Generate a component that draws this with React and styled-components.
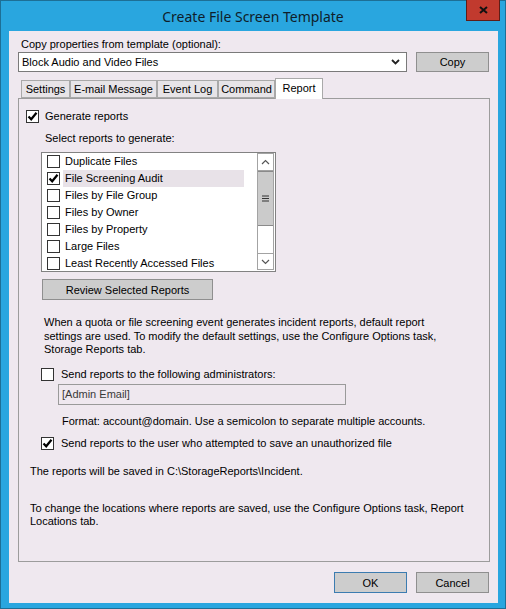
import React from 'react';
import styled, { createGlobalStyle } from 'styled-components';

const GlobalStyle = createGlobalStyle`
  html, body { margin: 0; padding: 0; background: #29a6df; }
  body { font-family: "Liberation Sans", Arial, sans-serif; font-size: 11px; color: #000; }
  * { box-sizing: border-box; }
`;

const Window = styled.div`
  width: 506px;
  height: 609px;
  display: flex;
  flex-direction: column;
  background: #29a6df;
  border: 1px solid #1d6f96;
`;

const TitleBar = styled.div`
  height: 30px;
  flex: none;
  display: grid;
  grid-template-columns: 1fr auto 1fr;
  align-items: start;
`;

const Title = styled.div`
  grid-column: 2;
  font-family: "Noto Sans", "Open Sans", sans-serif;
  font-size: 14px;
  line-height: 31px;
  color: #0f1d2a;
  white-space: nowrap;
`;

const CloseButton = styled.div`
  grid-column: 3;
  justify-self: end;
  margin: -1px 5px 0 0;
  width: 34px;
  height: 21px;
  background: #c13a2e;
  border: 1px solid #5e1d17;
  border-top: none;
  display: flex;
  align-items: center;
  justify-content: center;
`;

const Client = styled.div`
  flex: 1;
  margin: 0 7px 5px 8px;
  background: #efe8ef;
  padding: 7px 9px 10px;
  display: flex;
  flex-direction: column;
`;

const FieldLabel = styled.div`
  line-height: 13px;
  height: 13px;
  padding-left: 3px;
`;

const TemplateRow = styled.div`
  margin-top: 1px;
  display: flex;
  gap: 9px;
  height: 20px;
`;

const Combo = styled.div`
  flex: 1;
  background: #fff;
  border: 1px solid #7a7a7a;
  display: flex;
  align-items: center;
  justify-content: space-between;
  padding: 0 6px 0 3px;
`;

const Button = styled.div`
  width: ${p => p.$w}px;
  height: ${p => p.$h || 21}px;
  flex: none;
  background: #cdcdcd;
  border: 1px solid ${p => (p.$default ? '#3c7cb0' : '#8f8f8f')};
  display: flex;
  align-items: center;
  justify-content: center;
  color: #000;
  margin: ${p => p.$m || '0'};
`;

const TabStrip = styled.div`
  margin-top: 6px;
  height: 20px;
  display: flex;
  align-items: flex-end;
  padding-left: 3px;
  position: relative;
  z-index: 1;
`;

const Tab = styled.div`
  width: ${p => p.$w}px;
  height: ${p => (p.$active ? 21 : 18)}px;
  margin-bottom: ${p => (p.$active ? -1 : 0)}px;
  background: ${p => (p.$active ? '#fff' : '#e7e4e7')};
  border: 1px solid #a9a9a9;
  border-bottom: ${p => (p.$active ? 'none' : '1px solid #a9a9a9')};
  display: flex;
  align-items: center;
  justify-content: center;
  padding-bottom: ${p => (p.$active ? 3 : 0)}px;
  white-space: nowrap;
`;

const TabPanel = styled.div`
  height: 464px;
  margin-right: -1px;
  border: 1px solid #9c9c9c;
  background: #efe8ef;
  padding: 11px 7px 0;
  display: flex;
  flex-direction: column;
  align-items: flex-start;
`;

const Footer = styled.div`
  margin-top: 10px;
  display: flex;
  justify-content: flex-end;
  gap: 9px;
`;

const CheckRow = styled.div`
  display: flex;
  align-items: center;
  gap: ${p => p.$gap || 6}px;
  height: 13px;
  margin: ${p => p.$m || '0'};
`;

const Box = styled.span`
  width: 13px;
  height: 13px;
  flex: none;
  background: #fff;
  border: 1px solid #333;
  display: flex;
  align-items: center;
  justify-content: center;
`;

const Text = styled.div`
  line-height: ${p => p.$lh || 13}px;
  margin: ${p => p.$m || '0'};
  white-space: nowrap;
  color: ${p => p.$c || '#000'};
`;

const ListBox = styled.div`
  margin: 7px 0 0 15px;
  width: 235px;
  height: 120px;
  border: 1px solid #828282;
  background: #fff;
  display: flex;
  overflow: hidden;
`;

const ListItems = styled.div`
  flex: 1;
  padding-left: 5px;
`;

const ListRow = styled.div`
  height: 17px;
  display: flex;
  align-items: center;
  gap: 3px;
`;

const ItemLabel = styled.span`
  width: 181px;
  height: 17px;
  line-height: 17px;
  padding-left: 2px;
  background: ${p => (p.$selected ? '#e8e2e8' : 'transparent')};
  white-space: nowrap;
`;

const ScrollBar = styled.div`
  width: 17px;
  height: 117px;
  margin-right: 1px;
  flex: none;
  border: 1px solid #a3a3a3;
  display: flex;
  flex-direction: column;
  background: #fff;
`;

const ScrollArrow = styled.div`
  height: ${p => p.$h}px;
  flex: none;
  display: flex;
  align-items: center;
  justify-content: center;
  border-${p => p.$side}: 1px solid #a3a3a3;
`;

const Thumb = styled.div`
  height: 55px;
  flex: none;
  background: #cbcbcb;
  border-top: 1px solid #8a8a8a;
  border-bottom: 1px solid #8a8a8a;
  display: flex;
  align-items: center;
  justify-content: center;
`;

const Track = styled.div`
  flex: 1;
`;

const EmailField = styled.div`
  margin: 3px 0 0 32px;
  width: 288px;
  height: 21px;
  border: 1px solid #9a9a9a;
  padding-left: 3px;
  display: flex;
  align-items: center;
  color: #3a3a3a;
`;

const Check = ({ on }) => (
  <Box>
    {on && (
      <svg width="11" height="11" viewBox="0 0 11 11">
        <path d="M1.5 5.5 L4.2 8.3 L9.5 1.8" fill="none" stroke="#000" strokeWidth="2.2" />
      </svg>
    )}
  </Box>
);

const Chevron = ({ up, color = '#555', w = 1.2 }) => (
  <svg width="9" height="6" viewBox="0 0 9 6">
    <path d={up ? 'M1 5 L4.5 1.5 L8 5' : 'M1 1 L4.5 4.5 L8 1'} fill="none" stroke={color} strokeWidth={w} />
  </svg>
);

const reports = [
  'Duplicate Files',
  'File Screening Audit',
  'Files by File Group',
  'Files by Owner',
  'Files by Property',
  'Large Files',
  'Least Recently Accessed Files',
];

const tabs = [
  ['Settings', 49],
  ['E-mail Message', 87],
  ['Event Log', 61],
  ['Command', 57],
  ['Report', 48],
];

export default function App() {
  return (
    <>
      <GlobalStyle />
      <Window>
        <TitleBar>
          <Title>Create File Screen Template</Title>
          <CloseButton>
            <svg width="9" height="8" viewBox="0 0 9 8">
              <path d="M1 1 L8 7 M8 1 L1 7" stroke="#111" strokeWidth="2" />
            </svg>
          </CloseButton>
        </TitleBar>
        <Client>
          <FieldLabel>Copy properties from template (optional):</FieldLabel>
          <TemplateRow>
            <Combo>
              <span>Block Audio and Video Files</span>
              <Chevron color="#222" w={1.8} />
            </Combo>
            <Button $w={73} $h={20}>Copy</Button>
          </TemplateRow>
          <TabStrip>
            {tabs.map(([t, w]) => (
              <Tab key={t} $w={w} $active={t === 'Report'}>{t}</Tab>
            ))}
          </TabStrip>
          <TabPanel>
            <CheckRow>
              <Check on />
              <Text>Generate reports</Text>
            </CheckRow>
            <Text $m="9px 0 0 19px">Select reports to generate:</Text>
            <ListBox>
              <ListItems>
                {reports.map((r, i) => (
                  <ListRow key={r}>
                    <Check on={i === 1} />
                    <ItemLabel $selected={i === 1}>{r}</ItemLabel>
                  </ListRow>
                ))}
              </ListItems>
              <ScrollBar>
                <ScrollArrow $h={17} $side="bottom"><Chevron up /></ScrollArrow>
                <Thumb>
                  <svg width="7" height="7" viewBox="0 0 7 7">
                    <path d="M0 1 H7 M0 3.5 H7 M0 6 H7" stroke="#333" strokeWidth="1.2" />
                  </svg>
                </Thumb>
                <Track />
                <ScrollArrow $h={16} $side="top"><Chevron /></ScrollArrow>
              </ScrollBar>
            </ListBox>
            <Button $w={171} $m="7px 0 0 16px">Review Selected Reports</Button>
            <Text $lh={13.5} $m="16px 0 0 18px">
              When a quota or file screening event generates incident reports, default report<br />
              settings are used. To modify the default settings, use the Configure Options task,<br />
              Storage Reports tab.
            </Text>
            <CheckRow $gap={7} $m="11px 0 0 15px">
              <Check />
              <Text>Send reports to the following administrators:</Text>
            </CheckRow>
            <EmailField>[Admin Email]</EmailField>
            <Text $m="10px 0 0 36px">Format: account@domain. Use a semicolon to separate multiple accounts.</Text>
            <CheckRow $gap={7} $m="9px 0 0 15px">
              <Check on />
              <Text>Send reports to the user who attempted to save an unauthorized file</Text>
            </CheckRow>
            <Text $m="15px 0 0 4px">The reports will be saved in C:\StorageReports\Incident.</Text>
            <Text $m="24px 0 0 4px">
              To change the locations where reports are saved, use the Configure Options task, Report<br />
              Locations tab.
            </Text>
          </TabPanel>
          <Footer>
            <Button $w={73} $default>OK</Button>
            <Button $w={73}>Cancel</Button>
          </Footer>
        </Client>
      </Window>
    </>
  );
}
